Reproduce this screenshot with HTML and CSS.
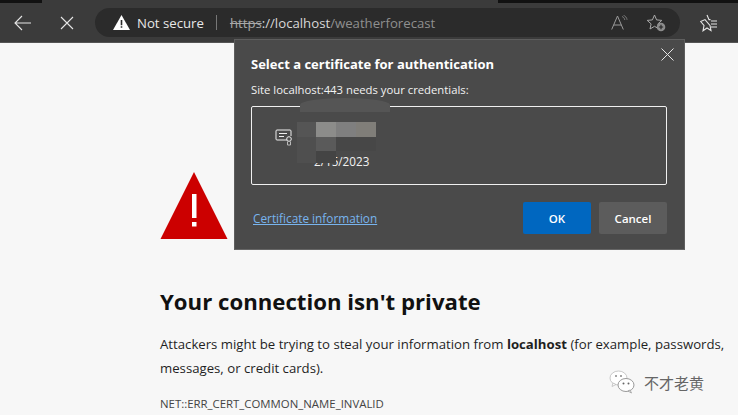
FILE: index.html
```html
<!DOCTYPE html>
<html lang="en">
<head>
  <meta charset="UTF-8">
  <title>Privacy error</title>
  <link rel="stylesheet" href="styles.css">
</head>
<body>
  <div class="tabstrip">
    <div class="tab-left"></div>
    <div class="tab-right"></div>
  </div>
  <div class="toolbar">
    <button class="tool-btn back-btn">
      <svg width="18" height="16" viewBox="0 0 18 16"><path d="M17 8H1M8 1L1 8l7 7" fill="none" stroke="#e6e6e6" stroke-width="1.1"/></svg>
    </button>
    <button class="tool-btn stop-btn">
      <svg width="14" height="14" viewBox="0 0 14 14"><path d="M1 1l12 12M13 1L1 13" fill="none" stroke="#e6e6e6" stroke-width="1.1"/></svg>
    </button>
    <div class="address-bar">
      <svg class="warn-icon" width="17" height="15" viewBox="0 0 17 15"><path d="M8.5 0L17 15H0z" fill="#fff"/><path d="M7.7 5h1.6v5.2H7.7zM7.7 11.2h1.6v1.6H7.7z" fill="#2b2b2b"/></svg>
      <span class="not-secure">Not secure</span>
      <span class="divider"></span>
      <span class="url"><s class="scheme">https</s><span class="host">://localhost</span>/weatherforecast</span>
      <span class="addr-icons">
        <svg width="17" height="15" viewBox="0 0 17 15"><path d="M.7 14.500L6.500 1l5.800 13.500M2.700 10h7.600" fill="none" stroke="#9a9a9a" stroke-width="1"/><path d="M11 1.500c1.600.6 2.500 1.800 2.800 3.500M12.500.3c2 .8 3.200 2.300 3.600 4.500" fill="none" stroke="#8a8a8a" stroke-width=".8"/></svg>
        <svg width="19" height="18" viewBox="0 0 19 18"><path d="M7.500 1l2.100 4.900 5.200.5-3.900 3.500 1.100 5.100-4.500-2.700-4.500 2.700 1.100-5.100L.2 6.400l5.200-.5z" fill="none" stroke="#a8a8a8" stroke-width="1"/><circle cx="14" cy="13" r="4.300" fill="#8c8c8c"/><path d="M11.800 13h4.400M14 10.800v4.400" stroke="#222" stroke-width="1.100"/></svg>
      </span>
    </div>
    <button class="tool-btn fav-btn">
      <svg width="18" height="18" viewBox="0 0 18 18"><path d="M7 1l2 4.600h1.500M10 11.500l1 5-4-2.500-4 2.800 1-5.300L.7 7.500l4.300-1.900z" fill="none" stroke="#e6e6e6" stroke-width="1.100"/><path d="M11 7h6M11 10h6M11 13h6" stroke="#e6e6e6" stroke-width="1.100"/></svg>
    </button>
  </div>

  <main class="page">
    <svg class="danger-icon" width="68" height="68" viewBox="0 0 68 68"><path d="M34 0l33.500 67H.5z" fill="#cc0000"/><path d="M32 22h4.500v24H32zM32 50h4.500v4.500H32z" fill="#fff"/></svg>
    <h1 class="title">Your connection isn't private</h1>
    <p class="desc">Attackers might be trying to steal your information from <b>localhost</b> (for example, passwords, messages, or credit cards).</p>
    <p class="err-code">NET::ERR_CERT_COMMON_NAME_INVALID</p>
  </main>

  <div class="cert-dialog">
    <button class="close-btn">
      <svg width="13" height="13" viewBox="0 0 13 13"><path d="M.5.5l12 12M12.500.5l-12 12" fill="none" stroke="#e6e6e6" stroke-width="1"/></svg>
    </button>
    <h2 class="dialog-title">Select a certificate for authentication</h2>
    <p class="dialog-site">Site localhost:443 needs your credentials:</p>
    <div class="cert-list">
      <svg class="cert-icon" width="17" height="17" viewBox="0 0 17 17"><path d="M12 11H2a1 1 0 0 1-1-1V2a1 1 0 0 1 1-1h13a1 1 0 0 1 1 1v5" fill="none" stroke="#eee" stroke-width="1"/><path d="M4 4.500h8M4 7.500h5" stroke="#eee" stroke-width="1"/><circle cx="14" cy="10" r="2.300" fill="none" stroke="#eee" stroke-width="1"/><path d="M12.500 12.500V16h3v-3.500" fill="none" stroke="#bbb" stroke-width="1"/></svg>
      <span class="cert-date">2/15/2023</span>
      <div class="smudge"></div>
      <div class="mosaic">
        <i class="m1"></i><i class="m2"></i><i class="m3"></i><i class="m4"></i>
        <i class="m5"></i><i class="m6"></i><i class="m7"></i><i class="m7"></i>
        <i class="m5"></i><i class="m8"></i><i></i><i></i>
      </div>
    </div>
    <div class="dialog-footer">
      <a class="cert-link">Certificate information</a>
      <div class="dialog-btns">
        <button class="btn btn-ok">OK</button>
        <button class="btn btn-cancel">Cancel</button>
      </div>
    </div>
  </div>

  <div class="watermark">
    <svg width="26" height="24" viewBox="0 0 26 24"><ellipse cx="9.500" cy="8" rx="8.500" ry="7" fill="#fff" stroke="#bbb" stroke-width=".8"/><path d="M4 13l-1 3.500 4-2z" fill="#fff" stroke="#bbb" stroke-width=".8"/><ellipse cx="17" cy="15" rx="8" ry="6.500" fill="#fff" stroke="#999" stroke-width="1"/><path d="M21 20l1.500 3-3.500-2z" fill="#fff" stroke="#999" stroke-width=".8"/><circle cx="7" cy="6" r="1" fill="#888"/><circle cx="12" cy="6" r="1" fill="#888"/><circle cx="14.500" cy="13.500" r="1" fill="#666"/><circle cx="19.500" cy="13.500" r="1" fill="#666"/></svg>
    <span>不才老黄</span>
  </div>
</body>
</html>
```

FILE: styles.css
```css
html, body {
  margin: 0;
  padding: 0;
}

body {
  position: relative;
  width: 738px;
  height: 415px;
  overflow: hidden;
  background-color: #f7f7f7;
  font-family: "Open Sans", "Noto Sans", "Liberation Sans", sans-serif;
  color: #1f1f1f;
}

.tabstrip {
  display: flex;
  justify-content: space-between;
  height: 3px;
  background-color: #3b3b3b;
}

.tab-left {
  width: 42px;
  background-color: #111;
}

.tab-right {
  width: 240px;
  background-color: #111;
}

.toolbar {
  display: flex;
  align-items: center;
  height: 39px;
  background-color: #3b3b3b;
  border-bottom: 1px solid #555;
}

.tool-btn {
  display: flex;
  align-items: center;
  justify-content: center;
  padding: 0;
  border: none;
  background: none;
}

.back-btn {
  width: 46px;
}

.stop-btn {
  width: 42px;
}

.fav-btn {
  width: 58px;
}

.address-bar {
  display: flex;
  align-items: center;
  width: 585px;
  height: 29px;
  margin-left: 7px;
  padding-left: 18px;
  box-sizing: border-box;
  background-color: #2b2b2b;
  border-radius: 15px;
  font-size: 13.2px;
  white-space: nowrap;
}

.warn-icon {
  margin-right: 7px;
}

.not-secure {
  color: #e8e8e8;
}

.divider {
  width: 1px;
  height: 15px;
  margin: 0 13px 0 12px;
  background-color: #777;
}

.url {
  color: #8f8f8f;
}

.scheme {
  color: #a8a8a8;
}

.host {
  color: #d8d8d8;
}

.addr-icons {
  display: flex;
  align-items: center;
  gap: 19px;
  margin-left: auto;
  margin-right: 14px;
}

.page {
  padding: 129px 0 0 160px;
}

.danger-icon {
  display: block;
}

.title {
  margin: 46px 0 0;
  font-size: 22.2px;
  line-height: 32px;
  font-weight: 700;
  color: #111;
}

.desc {
  width: 570px;
  margin: 14px 0 0;
  font-size: 13.2px;
  line-height: 24px;
}

.desc b {
  font-weight: 700;
}

.err-code {
  margin: 16px 0 0;
  font-size: 11.4px;
  line-height: 16px;
  color: #444;
}

.cert-dialog {
  position: absolute;
  left: 234px;
  top: 39px;
  width: 451px;
  height: 211px;
  box-sizing: border-box;
  padding: 15px 17px 0 16px;
  background-color: #4a4a4a;
  border: 1px solid #5e5e5e;
  border-bottom-color: #666;
}

.close-btn {
  position: absolute;
  top: 8px;
  right: 10px;
  padding: 0;
  border: none;
  background: none;
  line-height: 0;
}

.dialog-title {
  margin: 0;
  font-size: 13px;
  line-height: 18px;
  font-weight: 700;
  color: #fff;
}

.dialog-site {
  margin: 8px 0 0;
  font-size: 11.3px;
  line-height: 17px;
  color: #f2f2f2;
}

.cert-list {
  position: relative;
  height: 79px;
  margin-top: 8px;
  box-sizing: border-box;
  border: 1px solid #f0f0f0;
  border-radius: 2px;
}

.cert-icon {
  position: absolute;
  left: 23px;
  top: 22px;
}

.cert-date {
  position: absolute;
  left: 62px;
  top: 46px;
  font-size: 11.7px;
  line-height: 17px;
  color: #f2f2f2;
}

.smudge {
  position: absolute;
  left: 48px;
  top: -9px;
  width: 90px;
  height: 14px;
  background-color: #555;
  border-radius: 50% 50% 0 0;
}

.mosaic {
  position: absolute;
  left: 45px;
  top: 15px;
  display: grid;
  grid-template-columns: 19px repeat(3, 20px);
  grid-template-rows: 15px 14px 12px;
}

.m1 { background-color: #555; }
.m2 { background-color: #8c8c8a; }
.m3 { background-color: #7f7f7f; }
.m4 { background-color: #807e79; }
.m5 { background-color: #4f4f4f; }
.m6 { background-color: #5a5a5a; }
.m7 { background-color: #474747; }
.m8 { background-color: #444; }

.dialog-footer {
  display: flex;
  align-items: center;
  justify-content: space-between;
  margin-top: 17px;
}

.cert-link {
  margin-left: 2px;
  font-size: 11.8px;
  color: #78b4ee;
  text-decoration: underline;
}

.dialog-btns {
  display: flex;
  gap: 8px;
}

.btn {
  width: 68px;
  height: 32px;
  border: none;
  border-radius: 2px;
  font-family: inherit;
  font-size: 11.5px;
  font-weight: 600;
  color: #fff;
}

.btn-ok {
  background-color: #0067c0;
}

.btn-cancel {
  background-color: #5c5c5c;
}

.watermark {
  position: absolute;
  left: 609px;
  top: 370px;
  display: flex;
  align-items: center;
  gap: 9px;
  font-family: "Noto Sans CJK SC", sans-serif;
  font-size: 15px;
  color: #666;
}
```
